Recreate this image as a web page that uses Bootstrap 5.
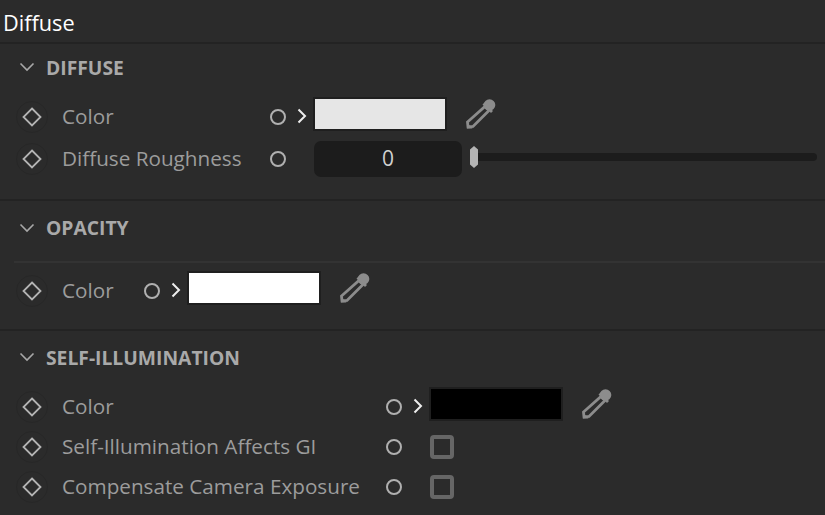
<!DOCTYPE html>
<html lang="en"><head><meta charset="utf-8"><title>Diffuse</title>
<link href="https://cdn.jsdelivr.net/npm/bootstrap@5.3.0/dist/css/bootstrap.min.css" rel="stylesheet">
<style>
html,body{height:515px;overflow:hidden}
body{background:#2b2b2b;font-family:"Open Sans","Noto Sans",sans-serif;color:#9c9c9c}
.panel-title{height:44px;padding:9px 0 0 3px;font-size:21.7px;line-height:28px;color:#fff;border-bottom:2px solid #232323}
.sect{border-bottom:2px solid #232323}
.s1{height:157px}.s2{height:130px}.s3{height:185px;border-bottom:0}
.sect-head{height:46px;padding-left:19px;gap:11px;font-weight:700;font-size:19.3px;color:#a9a9a9}
.sect-head span{padding-top:2px}
.s2 .sect-head{height:62px;margin-left:14px;padding-left:5px;padding-bottom:7px;border-bottom:2px solid #333}
.s3 .sect-head{height:52px}
.prow{padding-left:16px;font-size:20.7px}
.prow-a{height:42px}.prow-b{height:40px}
.first-a{margin-top:6px}.first-o{margin-top:7px}
.key{width:32px;height:32px;border-radius:50%;border:1px solid #272727}
.lbl{margin-left:14px;white-space:nowrap}
.w1{width:208px}.w2{width:82px}.w3{width:324px}
.ring{width:16px;height:16px;border-radius:50%;border:2.5px solid #b0b0b0;flex:none}
.chev{width:10px;margin-left:11px;margin-right:6px;margin-bottom:2px;flex:none}
.swatch{width:134px;height:34px;border:2px solid #1f1f1f;flex:none;margin-bottom:6px}
.sw-light{background:#e6e6e6}.sw-white{background:#fff}.sw-black{background:#000}
.picker{margin-left:19px;margin-bottom:6px;flex:none}
.numbox{width:148px;height:36px;margin-left:28px;background:#1c1c1c;border-radius:7px;color:#d0d0d0;font-size:21px}
.thumb{width:8px;height:22px;margin:0 -1px 4px 8px;background:#b4b4b4;flex:none;clip-path:polygon(50% 0,100% 16%,100% 84%,50% 100%,0 84%,0 16%);z-index:1}
.track{flex:1;height:8px;background:#1c1c1c;margin:0 8px 4px 0;border-radius:0 4px 4px 0}
.check{width:24px;height:24px;margin-left:28px;border:4px solid #666;border-radius:4px;flex:none}
</style></head><body>
<svg width="0" height="0" class="d-block position-absolute"><defs>
<symbol id="dia" viewBox="0 0 20 20"><path d="M10 1.500 18.500 10 10 18.500 1.500 10Z" fill="none" stroke="#b4b4b4" stroke-width="1.8"/></symbol>
<symbol id="cv" viewBox="0 0 16 10"><path d="M1.500 1.500 8 8l6.500-6.500" fill="none" stroke="#a8a8a8" stroke-width="1.6"/></symbol>
<symbol id="gt" viewBox="0 0 10 16"><path d="M1.500 1.500 8 8l-6.500 6.500" fill="none" stroke="#eee" stroke-width="2"/></symbol>
<symbol id="pk" viewBox="0 0 30 30"><path d="M19 7.500 23 11.500 7 27.500 2 28 1.500 23Z" fill="none" stroke="#8c8c8c" stroke-width="2.800"/><circle cx="23.500" cy="6" r="5.800" fill="#8c8c8c"/><path d="M16.500 5.500 18.500 3.500 27 12 25 14Z" fill="#8c8c8c"/><path d="M1 24 6.500 29.500H1Z" fill="#8c8c8c"/></symbol>
</defs></svg>
<div class="panel-title">Diffuse</div>

<section class="sect s1">
 <div class="sect-head d-flex align-items-center"><svg width="16" height="10"><use href="#cv"/></svg><span>DIFFUSE</span></div>
 <div class="prow prow-a first-a d-flex align-items-center">
  <span class="key d-flex align-items-center justify-content-center"><svg width="20" height="20"><use href="#dia"/></svg></span>
  <span class="lbl w1">Color</span><span class="ring"></span>
  <svg class="chev" width="10" height="16"><use href="#gt"/></svg>
  <span class="swatch sw-light"></span>
  <svg class="picker" width="30" height="30"><use href="#pk"/></svg>
 </div>
 <div class="prow prow-a d-flex align-items-center">
  <span class="key d-flex align-items-center justify-content-center"><svg width="20" height="20"><use href="#dia"/></svg></span>
  <span class="lbl w1">Diffuse Roughness</span><span class="ring"></span>
  <span class="numbox d-flex align-items-center justify-content-center">0</span>
  <span class="thumb"></span><span class="track"></span>
 </div>
</section>

<section class="sect s2">
 <div class="sect-head d-flex align-items-center"><svg width="16" height="10"><use href="#cv"/></svg><span>OPACITY</span></div>
 <div class="prow prow-a first-o d-flex align-items-center">
  <span class="key d-flex align-items-center justify-content-center"><svg width="20" height="20"><use href="#dia"/></svg></span>
  <span class="lbl w2">Color</span><span class="ring"></span>
  <svg class="chev" width="10" height="16"><use href="#gt"/></svg>
  <span class="swatch sw-white"></span>
  <svg class="picker" width="30" height="30"><use href="#pk"/></svg>
 </div>
</section>

<section class="sect s3">
 <div class="sect-head d-flex align-items-center"><svg width="16" height="10"><use href="#cv"/></svg><span>SELF-ILLUMINATION</span></div>
 <div class="prow prow-b d-flex align-items-center mt-1">
  <span class="key d-flex align-items-center justify-content-center"><svg width="20" height="20"><use href="#dia"/></svg></span>
  <span class="lbl w3">Color</span><span class="ring"></span>
  <svg class="chev" width="10" height="16"><use href="#gt"/></svg>
  <span class="swatch sw-black"></span>
  <svg class="picker" width="30" height="30"><use href="#pk"/></svg>
 </div>
 <div class="prow prow-b d-flex align-items-center">
  <span class="key d-flex align-items-center justify-content-center"><svg width="20" height="20"><use href="#dia"/></svg></span>
  <span class="lbl w3">Self-Illumination Affects GI</span><span class="ring"></span>
  <span class="check"></span>
 </div>
 <div class="prow prow-b d-flex align-items-center">
  <span class="key d-flex align-items-center justify-content-center"><svg width="20" height="20"><use href="#dia"/></svg></span>
  <span class="lbl w3">Compensate Camera Exposure</span><span class="ring"></span>
  <span class="check"></span>
 </div>
</section>
<script src="https://cdn.jsdelivr.net/npm/bootstrap@5.3.0/dist/js/bootstrap.bundle.min.js"></script>
</body></html>
